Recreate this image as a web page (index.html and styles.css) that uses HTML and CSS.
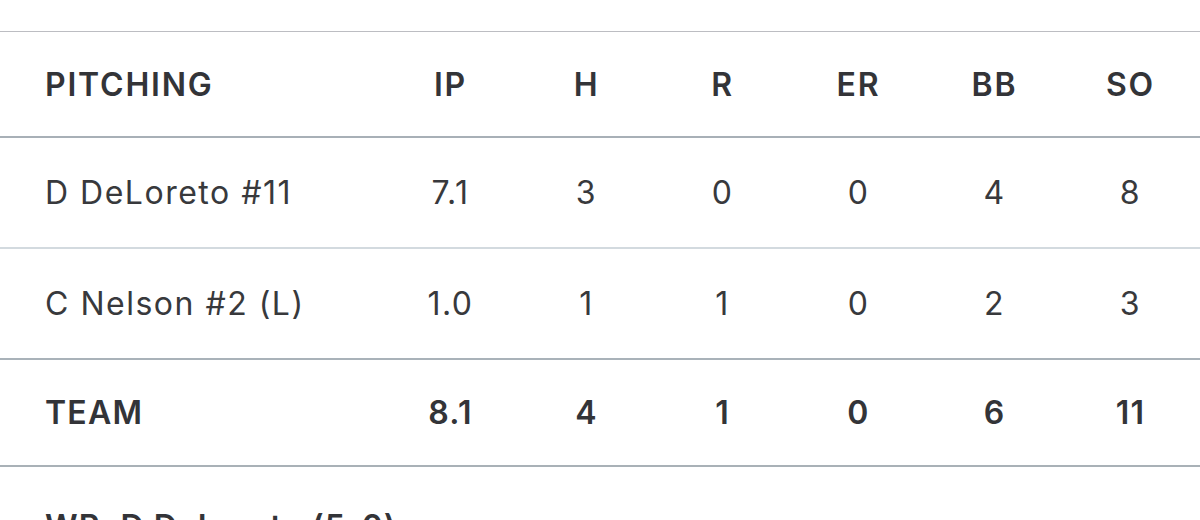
FILE: index.html
```html
<!DOCTYPE html>
<html>
<head>
<meta charset="utf-8">
<link rel="stylesheet" href="styles.css">
</head>
<body>
<div class="page">
  <div class="stats">
    <div class="row head">
      <div class="name">PITCHING</div>
      <div class="num">IP</div>
      <div class="num">H</div>
      <div class="num">R</div>
      <div class="num">ER</div>
      <div class="num">BB</div>
      <div class="num">SO</div>
    </div>
    <div class="row player">
      <div class="name">D DeLoreto #11</div>
      <div class="num">7.1</div>
      <div class="num">3</div>
      <div class="num">0</div>
      <div class="num">0</div>
      <div class="num">4</div>
      <div class="num">8</div>
    </div>
    <div class="row player last">
      <div class="name">C Nelson #2 (L)</div>
      <div class="num">1.0</div>
      <div class="num">1</div>
      <div class="num">1</div>
      <div class="num">0</div>
      <div class="num">2</div>
      <div class="num">3</div>
    </div>
    <div class="row team">
      <div class="name">TEAM</div>
      <div class="num">8.1</div>
      <div class="num">4</div>
      <div class="num">1</div>
      <div class="num">0</div>
      <div class="num">6</div>
      <div class="num">11</div>
    </div>
  </div>
  <p class="note">WP: D DeLoreto (5-0)</p>
</div>
</body>
</html>
```

FILE: styles.css
```css
html, body {
  margin: 0;
  padding: 0;
  background: #ffffff;
}
body {
  font-family: Inter, "Liberation Sans", Arial, sans-serif;
  color: #333438;
  width: 1200px;
  height: 520px;
  overflow: hidden;
}
.page {
  padding-top: 31px;
}
.stats {
  border-top: 1px solid #bcbdc2;
}
.row {
  display: grid;
  grid-template-columns: 382px repeat(6, 136px);
  align-items: center;
}
.name {
  padding-left: 45px;
}
.num {
  text-align: center;
  padding-left: 1px;
}
.head {
  height: 104px;
  border-bottom: 2px solid #a8b0b7;
  font-weight: 600;
  font-size: 32px;
  letter-spacing: 1.8px;
}
.player {
  height: 109px;
  border-bottom: 2px solid #d3dadf;
  font-size: 32px;
  letter-spacing: 1.5px;
  color: #38393c;
}
.player.last {
  border-bottom: 2px solid #a9b2b9;
}
.team {
  height: 105px;
  border-bottom: 2px solid #a9b1b7;
  font-weight: 600;
  font-size: 32px;
  letter-spacing: 1.2px;
}
.note {
  margin: 40px 0 0 45px;
  font-size: 32px;
  font-weight: 600;
  letter-spacing: 1px;
}
```
